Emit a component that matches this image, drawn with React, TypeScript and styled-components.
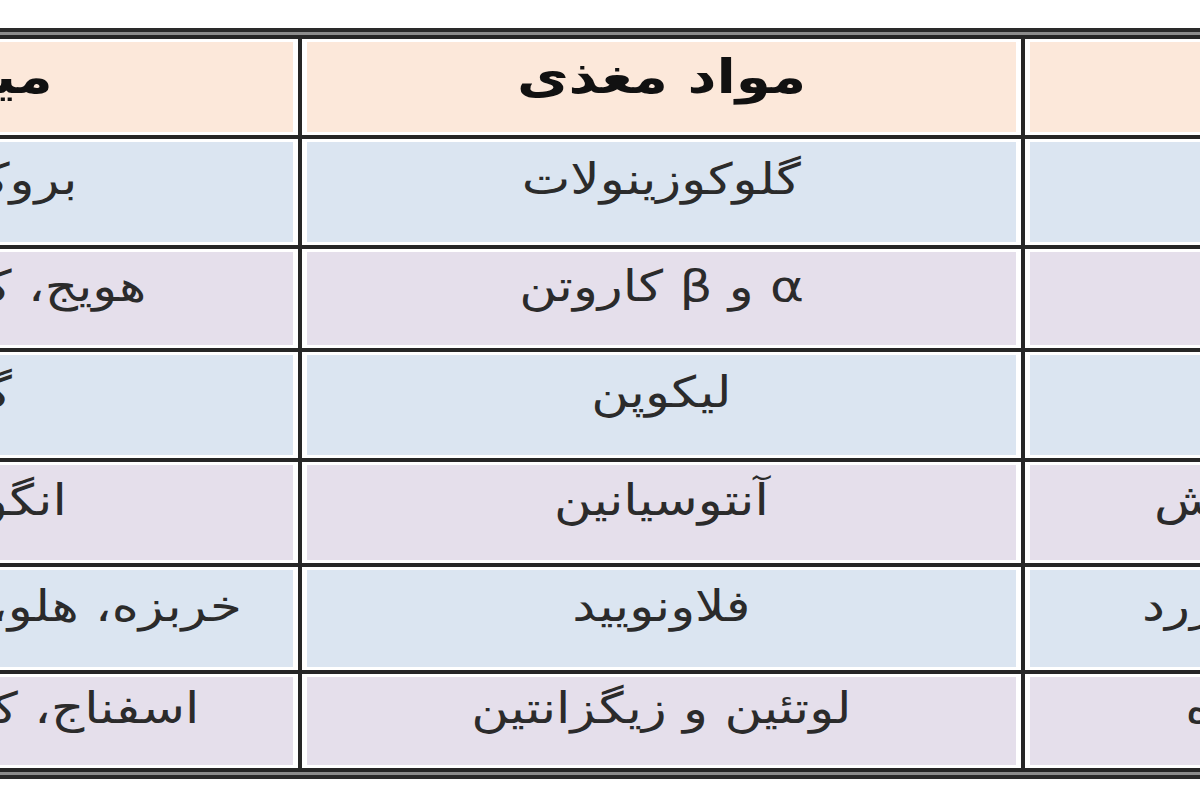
import React from "react";
import styled, { createGlobalStyle } from "styled-components";

const GlobalStyle = createGlobalStyle`
  html, body {
    margin: 0;
    padding: 0;
    background: #ffffff;
    overflow: hidden;
  }
  body {
    font-family: "DejaVu Sans", "Noto Sans", sans-serif;
  }
`;

const Page = styled.div`
  width: 1200px;
  height: 800px;
  overflow: hidden;
  padding-top: 28px;
  box-sizing: border-box;
`;

// outer double border: dark / gray band / dark (the inner dark part comes from the grid)
const Frame = styled.div`
  width: 2243px;
  margin-left: -708px;
  border-top: 4px solid #2a2a2a;
  border-bottom: 4px solid #2a2a2a;
  padding: 3px 0;
  background: #8c8c8c;
`;

const Table = styled.div`
  direction: rtl;
  display: grid;
  grid-template-columns: 510px 719px 1006px;
  grid-template-rows: 96px 106px 99px 106px 101px 103px 94px;
  gap: 4px;
  padding: 4px 0;
  background: #262626;
`;

const Cell = styled.div<{ $bg: string; $head?: boolean }>`
  display: flex;
  align-items: center;
  justify-content: center;
  box-sizing: border-box;
  border-style: solid;
  border-color: #ffffff;
  border-width: 3px 5px;
  background: ${(p) => p.$bg};
  color: ${(p) => (p.$head ? "#111111" : "#2b2b2b")};
  font-size: ${(p) => (p.$head ? "47px" : "43px")};
  font-weight: ${(p) => (p.$head ? 700 : 400)};
  white-space: nowrap;
  overflow: hidden;
  padding-bottom: ${(p) => (p.$head ? "22px" : "26px")};
`;

// the source font is wider than DejaVu's Arabic, so widen the glyphs a little
const Label = styled.span`
  display: inline-block;
  transform: scaleX(1.2);
`;

const HEAD_BG = "#fce8da";
const BLUE = "#dbe5f1";
const LILAC = "#e5dfeb";

const rows = [
  { color: "سبز", nutrient: "گلوکوزینولات", foods: "بروکلی، کلم، کلم بروکسل", bg: BLUE },
  { color: "نارنجی", nutrient: "α و β کاروتن", foods: "هویج، کدو حلوایی، زردآلو، طالبی", bg: LILAC },
  { color: "قرمز", nutrient: "لیکوپن", foods: "گوجه‌فرنگی، هندوانه", bg: BLUE },
  { color: "آبی و بنفش", nutrient: "آنتوسیانین", foods: "انگور، بادمجان، کلم قرمز", bg: LILAC },
  { color: "نارنجی و زرد", nutrient: "فلاونویید", foods: "خربزه، هلو، پرتقال، نارنگی، لیمو، انبه، آلو", bg: BLUE },
  { color: "سبز تیره", nutrient: "لوتئین و زیگزانتین", foods: "اسفناج، کلم‌پیچ، کاهو، نخود فرنگی، به", bg: LILAC },
];

export default function App() {
  return (
    <>
      <GlobalStyle />
      <Page>
        <Frame>
          <Table>
            <Cell $bg={HEAD_BG} $head><Label>رنگ</Label></Cell>
            <Cell $bg={HEAD_BG} $head><Label>مواد مغذی</Label></Cell>
            <Cell $bg={HEAD_BG} $head><Label>میوه‌ها و سبزیجات</Label></Cell>
            {rows.map((r) => (
              <React.Fragment key={r.nutrient}>
                <Cell $bg={r.bg}><Label>{r.color}</Label></Cell>
                <Cell $bg={r.bg}><Label>{r.nutrient}</Label></Cell>
                <Cell $bg={r.bg}><Label>{r.foods}</Label></Cell>
              </React.Fragment>
            ))}
          </Table>
        </Frame>
      </Page>
    </>
  );
}
